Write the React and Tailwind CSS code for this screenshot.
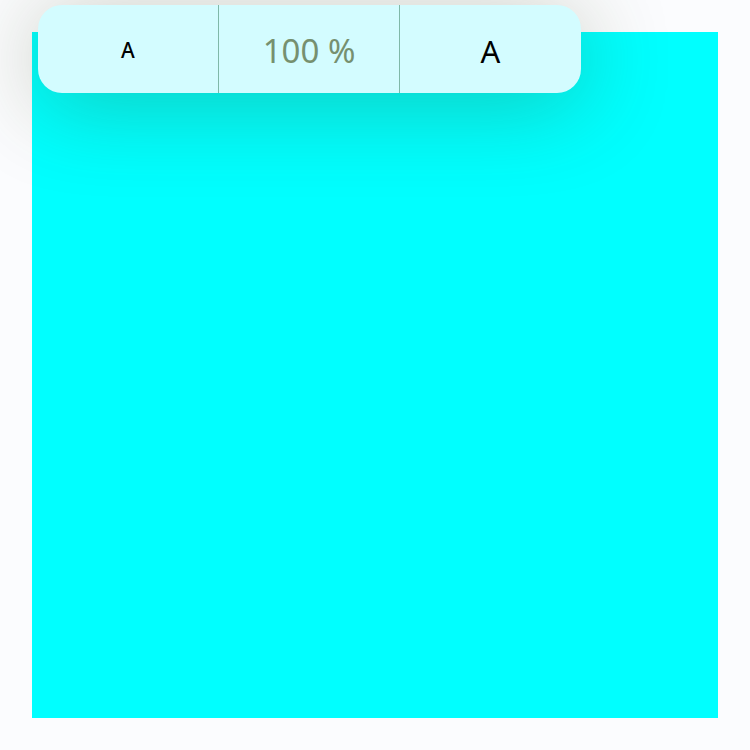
import React from "react";

const Segment = ({ children, className }) => (
  <button
    type="button"
    className={`flex items-center justify-center h-full pt-[4px] ${className || ""}`}
  >
    {children}
  </button>
);

export default function App() {
  return (
    <div
      className="relative w-[750px] h-[750px] bg-[#fbfcfe] p-8"
      style={{ fontFamily: '"Noto Sans", "Open Sans", sans-serif' }}
    >
      <div className="w-[686px] h-[686px] bg-[#00ffff]" />

      <div className="absolute left-[38px] top-[5px] w-[543px] h-[88px] grid grid-cols-3 bg-[#d3fcff] rounded-[24px] shadow-[0_10px_90px_rgba(60,70,20,0.3)]">
        <Segment className="border-r border-[#7fb8a8]">
          <span className="text-[21px] font-medium text-black">A</span>
        </Segment>
        <Segment className="border-r border-[#7fb8a8]">
          <span className="text-[33px] text-[#76906f]">100 %</span>
        </Segment>
        <Segment>
          <span className="text-[31px] text-black">A</span>
        </Segment>
      </div>
    </div>
  );
}
